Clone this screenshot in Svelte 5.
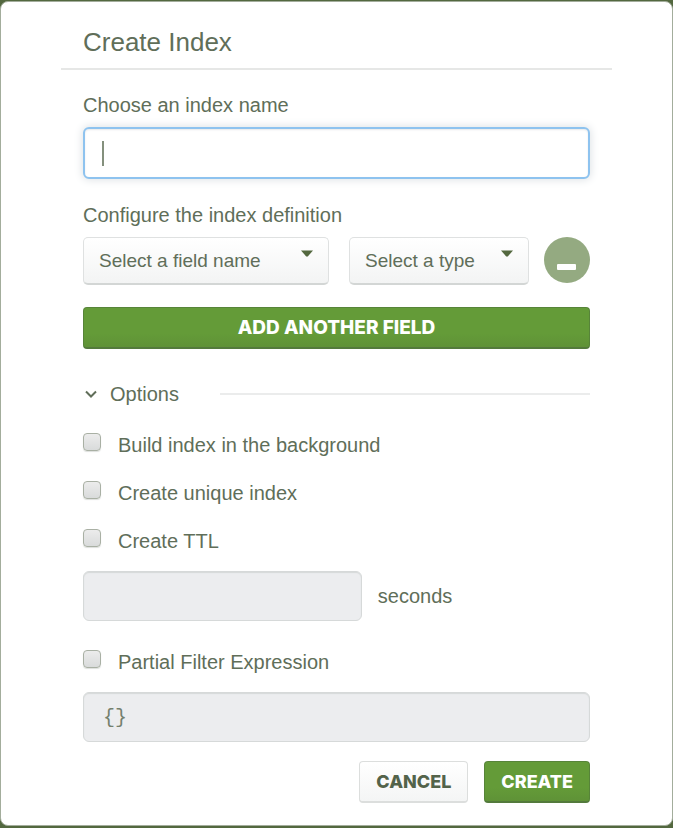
<script>
  import { onMount } from 'svelte';

  let indexName = $state('');
  let fieldName = $state('');
  let fieldType = $state('');
  let showOptions = $state(true);
  let background = $state(false);
  let unique = $state(false);
  let ttl = $state(false);
  let partial = $state(false);
  let seconds = $state('');
  let filter = $state('{}');
  let nameInput;

  onMount(() => nameInput.focus());
</script>

<div class="backdrop">
  <div class="modal" role="dialog" aria-labelledby="title">
    <header>
      <h1 id="title">Create Index</h1>
    </header>

    <form onsubmit={(e) => e.preventDefault()}>
      <label class="heading" for="name">Choose an index name</label>
      <div class="name-box">
        <input id="name" class="text name" type="text" autocomplete="off" bind:this={nameInput} bind:value={indexName} />
        {#if !indexName}<span class="caret"></span>{/if}
      </div>

      <label class="heading definition" for="field">Configure the index definition</label>
      <div class="field-row">
        <div class="select field">
          <select id="field" bind:value={fieldName}>
            <option value="">Select a field name</option>
            <option value="_id">_id</option>
          </select>
          <svg class="arrow" viewBox="0 0 12 7" aria-hidden="true"><path d="M0 0.5h12L6.8 6.4H5.2z" /></svg>
        </div>
        <div class="select type">
          <select aria-label="Type" bind:value={fieldType}>
            <option value="">Select a type</option>
            <option value="1">1 (asc)</option>
            <option value="-1">-1 (desc)</option>
          </select>
          <svg class="arrow" viewBox="0 0 12 7" aria-hidden="true"><path d="M0 0.5h12L6.8 6.4H5.2z" /></svg>
        </div>
        <button class="remove" type="button" aria-label="Remove field">
          <svg viewBox="0 0 46 46" aria-hidden="true"><rect x="13" y="27" width="19" height="6" rx="1" /></svg>
        </button>
      </div>

      <button class="btn primary add" type="button">ADD ANOTHER FIELD</button>

      <div class="options-head">
        <button class="toggle" type="button" aria-expanded={showOptions} onclick={() => (showOptions = !showOptions)}>
          <svg viewBox="0 0 16 16" aria-hidden="true"><path d="M3 5.5l5 5 5-5" /></svg>
          Options
        </button>
        <span class="rule"></span>
      </div>

      {#if showOptions}
        <label class="check"><input type="checkbox" bind:checked={background} /><span>Build index in the background</span></label>
        <label class="check"><input type="checkbox" bind:checked={unique} /><span>Create unique index</span></label>
        <label class="check"><input type="checkbox" bind:checked={ttl} /><span>Create TTL</span></label>
        <div class="ttl">
          <input id="seconds" class="text" type="text" disabled={!ttl} bind:value={seconds} />
          <label for="seconds">seconds</label>
        </div>
        <label class="check partial"><input type="checkbox" bind:checked={partial} /><span>Partial Filter Expression</span></label>
        <input class="text code" type="text" aria-label="Filter expression" disabled={!partial} bind:value={filter} />
      {/if}

      <footer>
        <button class="btn plain" type="button">CANCEL</button>
        <button class="btn primary" type="submit">CREATE</button>
      </footer>
    </form>
  </div>
</div>

<style>
  :global(body) {
    background: #53683f;
  }
  .backdrop,
  .backdrop * {
    box-sizing: border-box;
  }
  .backdrop {
    min-height: 100vh;
    padding: 1px 0 2px;
    background: #53683f;
    font-family: "Liberation Sans", Arial, sans-serif;
    font-size: 20px;
    line-height: 24px;
    color: #606e59;
  }
  .modal {
    padding: 0 60px 22px;
    border: 1px solid #a3ad9c;
    border-radius: 8px;
    background: #fff;
  }
  header {
    padding: 24px 22px 10px;
    border-bottom: 2px solid #e6e7e6;
  }
  h1 {
    margin: 0;
    font-size: 26px;
    font-weight: 400;
    line-height: 32px;
  }
  form {
    padding: 23px 22px 0;
  }
  .heading {
    display: block;
    margin-bottom: 10px;
  }
  .definition {
    margin: 24px 0 10px;
  }
  .name-box {
    position: relative;
  }
  .text {
    display: block;
    width: 100%;
    height: 50px;
    padding: 0 19px;
    border: 1px solid #d6d9d9;
    border-radius: 6px;
    background: #fff;
    box-shadow: inset 0 1px 1px #d6d9d9;
    font: inherit;
    color: inherit;
    outline: 0;
  }
  .text:disabled {
    background: #ecedef;
    color: #74806d;
  }
  .code {
    font-family: "Liberation Mono", monospace;
  }
  .name {
    height: 52px;
    border: 2px solid #8ec3ef;
    box-shadow: 0 0 8px 1px #dfe3e6, inset 0 1px 2px #e6e8ea;
    caret-color: transparent;
  }
  .caret {
    position: absolute;
    top: 14px;
    left: 19px;
    width: 2px;
    height: 25px;
    background: #84907d;
  }
  .field-row {
    display: flex;
    align-items: flex-start;
  }
  .select {
    position: relative;
    margin-right: 20px;
  }
  .field {
    flex: 246;
  }
  .type {
    flex: 180;
    margin-right: 15px;
  }
  select {
    display: block;
    width: 100%;
    height: 48px;
    padding: 0 15px;
    appearance: none;
    border: 1px solid #dfe1e1;
    border-bottom: 2px solid #d3d6d5;
    border-radius: 5px;
    background: linear-gradient(#fff, #f3f4f4);
    font: inherit;
    font-size: 19px;
    color: inherit;
  }
  .arrow {
    position: absolute;
    top: 13px;
    right: 16px;
    width: 12px;
    height: 7px;
    fill: #53683f;
    pointer-events: none;
  }
  .remove {
    flex: none;
    width: 46px;
    height: 46px;
    padding: 0;
    border: 0;
    border-radius: 50%;
    background: #94aa81;
  }
  .remove svg {
    display: block;
    fill: #fff;
  }
  .btn {
    height: 42px;
    padding: 0 16px;
    border: 1px solid #578439;
    border-bottom: 2px solid #537a3c;
    border-radius: 4px;
    font: 800 18px/24px Inter, "Liberation Sans", sans-serif;
  }
  .primary {
    background: linear-gradient(#649b38 65%, #5f9237);
    color: #fff;
  }
  .plain {
    border-color: #dcdedd;
    background: linear-gradient(#fff, #f4f5f5);
    color: #53634a;
  }
  .add {
    display: block;
    width: 100%;
    margin-top: 22px;
    font-size: 19px;
  }
  .options-head {
    display: flex;
    align-items: center;
    gap: 41px;
    margin: 33px 0 27px;
  }
  .toggle {
    display: flex;
    align-items: center;
    gap: 11px;
    padding: 0;
    border: 0;
    background: none;
    font: inherit;
    color: inherit;
  }
  .toggle svg {
    width: 16px;
    height: 16px;
    fill: none;
    stroke: #606e59;
    stroke-width: 2;
  }
  .rule {
    flex: 1;
    height: 2px;
    background: #ebecec;
  }
  .check {
    display: flex;
    align-items: flex-start;
    gap: 17px;
    margin-bottom: 24px;
  }
  .check input {
    flex: none;
    width: 18px;
    height: 18px;
    margin: 0;
    appearance: none;
    border: 1px solid #a9b0a4;
    border-radius: 4px;
    background: linear-gradient(#ececec, #d9dbdb);
    box-shadow: 0 1px 1px #dddfdd;
  }
  .check input:checked {
    background: #649b38;
  }
  .ttl {
    display: flex;
    align-items: center;
    gap: 16px;
    margin: -6px 0 29px;
  }
  .ttl .text {
    width: 55%;
  }
  .partial {
    margin-bottom: 18px;
  }
  footer {
    display: flex;
    justify-content: flex-end;
    gap: 16px;
    margin-top: 19px;
  }
</style>
